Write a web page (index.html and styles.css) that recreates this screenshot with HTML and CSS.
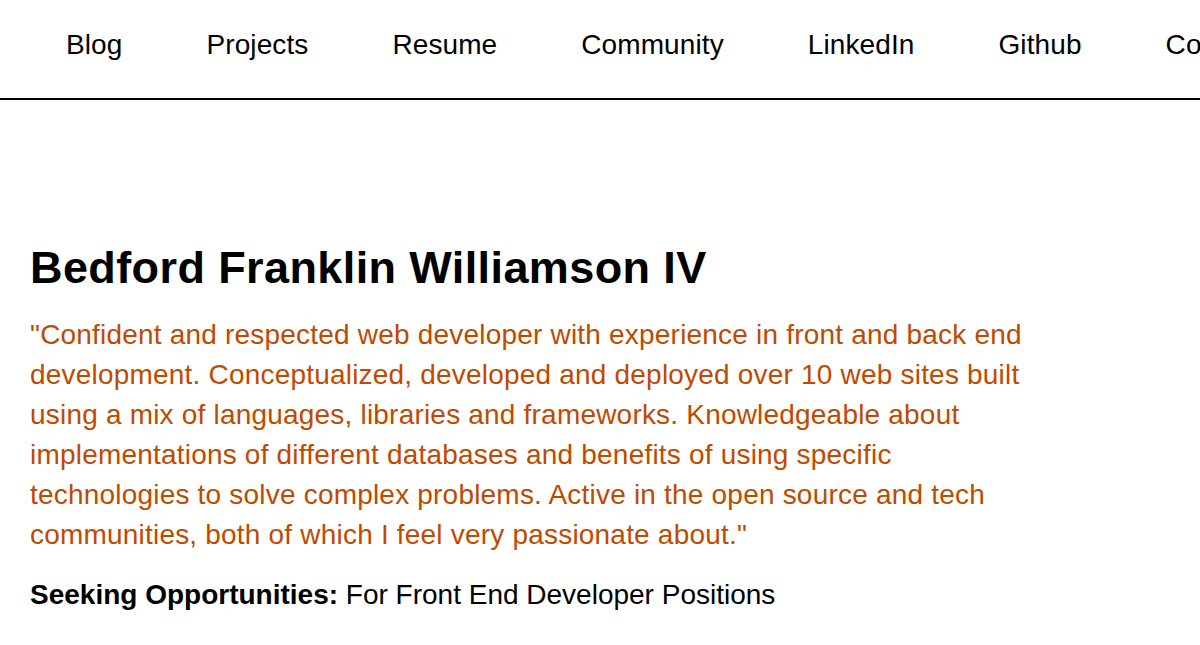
FILE: index.html
```html
<!DOCTYPE html>
<html lang="en">
<head>
<meta charset="utf-8">
<title>Bedford Franklin Williamson IV</title>
<link rel="stylesheet" href="styles.css">
</head>
<body>
<nav class="topnav">
  <a class="nav-link" href="#">Blog</a>
  <a class="nav-link" href="#">Projects</a>
  <a class="nav-link" href="#">Resume</a>
  <a class="nav-link" href="#">Community</a>
  <a class="nav-link" href="#">LinkedIn</a>
  <a class="nav-link" href="#">Github</a>
  <a class="nav-link" href="#">Contact</a>
</nav>
<main class="intro">
  <h1 class="name">Bedford Franklin Williamson IV</h1>
  <p class="summary">"Confident and respected web developer with experience in front and back end development. Conceptualized, developed and deployed over 10 web sites built using a mix of languages, libraries and frameworks. Knowledgeable about implementations of different databases and benefits of using specific technologies to solve complex problems. Active in the open source and tech communities, both of which I feel very passionate about."</p>
  <p class="seeking"><strong>Seeking Opportunities:</strong> For Front End Developer Positions</p>
</main>
</body>
</html>
```
FILE: styles.css
```css
html, body {
  margin: 0;
  padding: 0;
  background: #fff;
  overflow: hidden;
}
body {
  font-family: "Liberation Sans", Helvetica, Arial, sans-serif;
  color: #000;
}
.topnav {
  display: flex;
  align-items: flex-start;
  height: 100px;
  box-sizing: border-box;
  padding: 29px 0 0 24px;
  border-bottom: 2px solid #000;
  white-space: nowrap;
  overflow: hidden;
}
.nav-link {
  flex: none;
  padding: 0 42px;
  font-size: 28px;
  line-height: 32px;
  letter-spacing: 0.1px;
  color: #000;
  text-decoration: none;
}
.intro {
  padding: 0 30px;
}
.name {
  margin: 142px 0 0;
  font-size: 45px;
  line-height: 52px;
  font-weight: bold;
  letter-spacing: 0.4px;
}
.summary {
  margin: 21px 0 0;
  max-width: 1000px;
  font-size: 28px;
  line-height: 40px;
  letter-spacing: 0.2px;
  color: #c04a00;
}
.seeking {
  margin: 20px 0 0;
  font-size: 28px;
  line-height: 40px;
}
```
